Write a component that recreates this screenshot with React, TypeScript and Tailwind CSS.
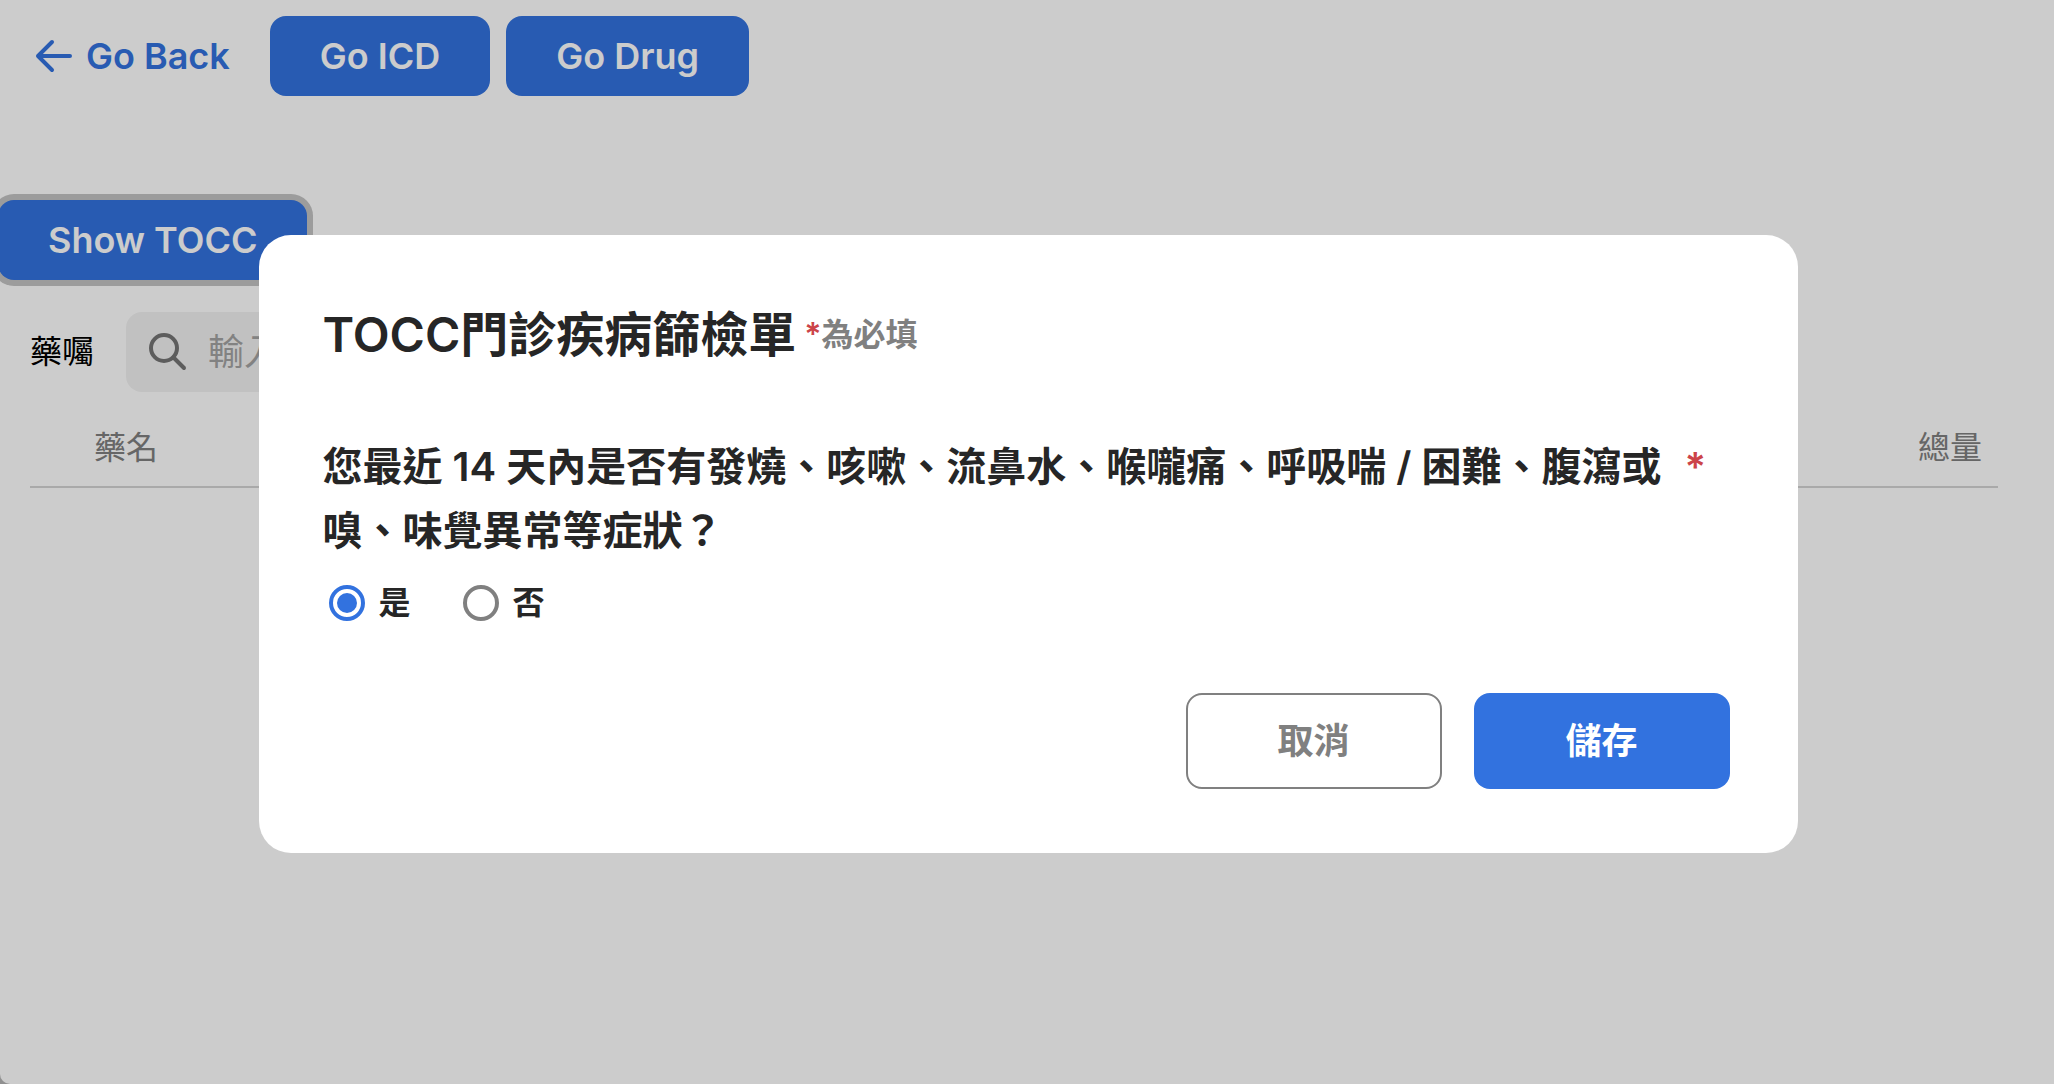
import { useState } from "react";

const primaryButton =
  "h-20 rounded-2xl bg-[#3272df] px-[50px] text-4xl font-semibold text-white";

function ArrowLeft() {
  return (
    <svg className="h-12 w-12" viewBox="0 0 48 48" fill="none" stroke="currentColor" strokeWidth="4" strokeLinecap="round" strokeLinejoin="round" aria-hidden="true">
      <path d="M40 24H8M22 10L8 24l14 14" />
    </svg>
  );
}

function SearchIcon() {
  return (
    <svg className="h-12 w-12 shrink-0 text-[#757575]" viewBox="0 0 48 48" fill="none" stroke="currentColor" strokeWidth="4" strokeLinecap="round" aria-hidden="true">
      <circle cx="20" cy="20" r="13" />
      <path d="M29.500 29.500L40 40" />
    </svg>
  );
}

function Choice({ label, checked, onSelect }: { label: string; checked: boolean; onSelect: () => void }) {
  return (
    <label className="flex items-center gap-3.5 text-[32px] leading-12 font-semibold">
      <input
        type="radio"
        name="symptoms"
        checked={checked}
        onChange={onSelect}
        className="size-9 appearance-none rounded-full border-4 border-[#808080] bg-white bg-clip-content p-1 checked:border-[#3272df] checked:bg-[#3272df]"
      />
      {label}
    </label>
  );
}

export default function App() {
  const [answer, setAnswer] = useState("yes");
  return (
    <div className="bg-[#b5b5b5] font-['Inter','Noto_Sans_CJK_TC',sans-serif] text-black">
      <div className="min-h-screen overflow-hidden rounded-bl-[10px] bg-white">
        <nav className="flex items-center gap-4 pt-4 pl-[30px]">
          <a href="#back" className="mr-6 flex items-center gap-2 text-4xl font-semibold text-[#3272df]">
            <ArrowLeft />
            Go Back
          </a>
          <button type="button" className={primaryButton}>Go ICD</button>
          <button type="button" className={primaryButton}>Go Drug</button>
        </nav>

        <main className="pt-26">
          <button type="button" className={`${primaryButton} -ml-0.5 ring-6 ring-[#c3c3c3]`}>Show TOCC</button>
          <div className="mt-8 flex items-center gap-8 px-[30px]">
            <label htmlFor="order" className="text-[32px]">藥囑</label>
            <div className="flex h-20 w-[900px] items-center gap-4 rounded-2xl bg-[#f2f2f2] pl-[18px]">
              <SearchIcon />
              <input id="order" type="text" placeholder="輸入藥名" className="min-w-0 flex-1 bg-transparent text-4xl placeholder:text-[#a3a3a3]" />
            </div>
          </div>
          <div className="pr-14 pl-[30px]">
            <table className="mt-6 w-full text-[32px] leading-12 text-[#808080]">
              <thead>
                <tr className="border-b-2 border-[#d4d4d4]">
                  <th className="pt-2 pb-3.5 pl-16 text-left font-normal">藥名</th>
                  <th className="pt-2 pr-4 pb-3.5 text-right font-normal">總量</th>
                </tr>
              </thead>
            </table>
          </div>
        </main>
      </div>

      <div className="fixed inset-0 flex items-center justify-center bg-black/20 pt-1 pl-0.5">
        <section role="dialog" aria-modal="true" aria-labelledby="tocc-title" className="w-3/4 rounded-[32px] bg-white px-16 py-16 text-[#262626]">
          <header className="mb-16 flex items-center gap-2">
            <h1 id="tocc-title" className="text-5xl leading-[72px] font-semibold">TOCC門診疾病篩檢單</h1>
            <p className="text-[32px] leading-12 font-semibold text-[#808080]">
              <span className="text-[#cc4449]">*</span>為必填
            </p>
          </header>
          <form>
            <fieldset>
              <legend className="flex gap-5 text-[40px] leading-16 font-semibold">
                <span className="max-w-[1342px]">
                  您最近 14 天內是否有發燒、咳嗽、流鼻水、喉嚨痛、呼吸喘 / 困難、腹瀉或嗅、味覺異常等症狀？
                </span>
                <span className="text-[#cc4449]">*</span>
              </legend>
              <div className="mt-4 flex gap-13 pl-1.5">
                <Choice label="是" checked={answer === "yes"} onSelect={() => setAnswer("yes")} />
                <Choice label="否" checked={answer === "no"} onSelect={() => setAnswer("no")} />
              </div>
            </fieldset>
            <div className="mt-[66px] flex justify-end gap-8 pr-1 text-4xl font-semibold">
              <button type="button" className="h-24 w-64 rounded-2xl border-2 border-[#808080] text-[#808080]">取消</button>
              <button type="button" className="h-24 w-64 rounded-2xl bg-[#3272df] text-white">儲存</button>
            </div>
          </form>
        </section>
      </div>
    </div>
  );
}
